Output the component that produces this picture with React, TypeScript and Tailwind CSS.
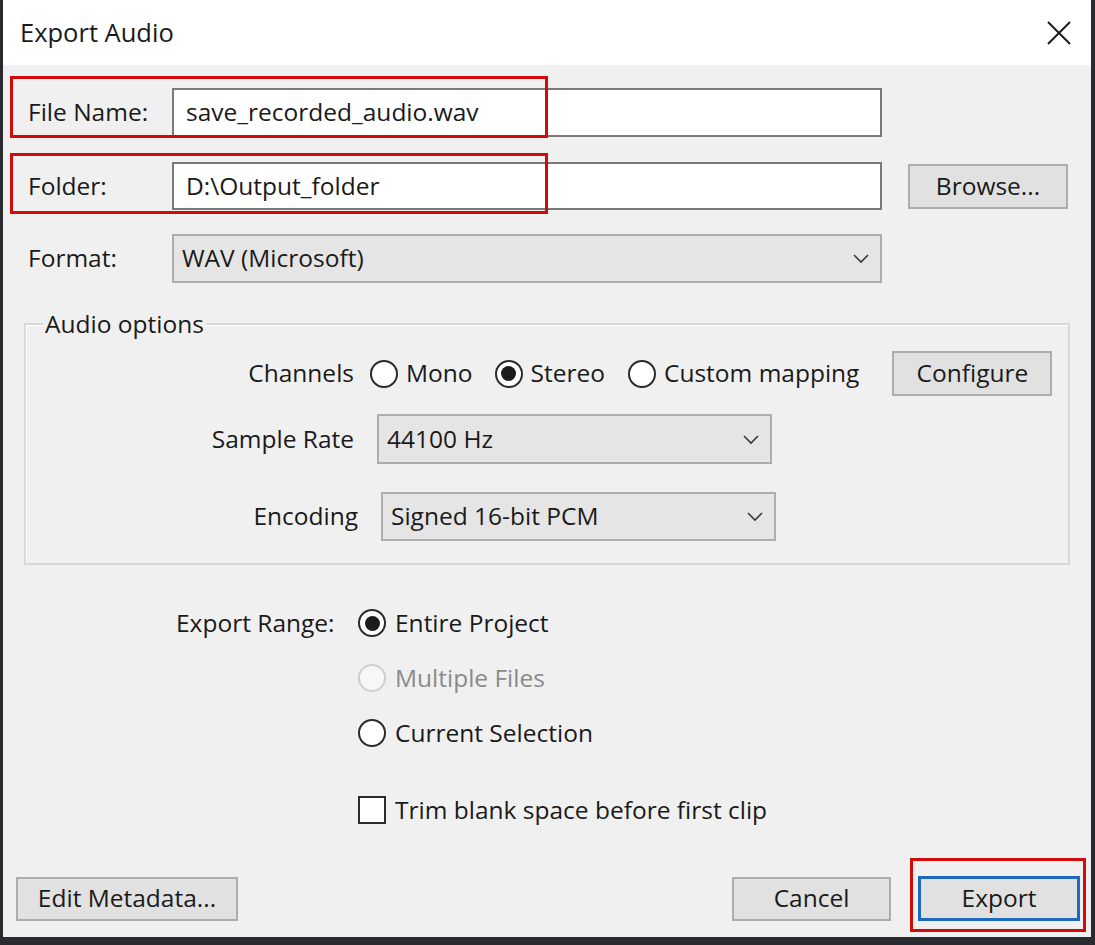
import React from "react";

function Radio({ checked, disabled }: { checked?: boolean; disabled?: boolean }) {
  return (
    <span
      className={`shrink-0 w-[28px] h-[28px] rounded-full border-2 flex items-center justify-center ${
        disabled ? "border-[#cfcfcf] bg-[#f7f7f7]" : "border-[#2b2b2b] bg-white"
      }`}
    >
      {checked && <span className="w-[15px] h-[15px] rounded-full bg-[#1c1c1c]" />}
    </span>
  );
}

function Chevron() {
  return (
    <svg width="18" height="11" viewBox="0 0 18 11" className="shrink-0">
      <polyline points="2,2 9,9 16,2" fill="none" stroke="#3a3a3a" strokeWidth="1.6" />
    </svg>
  );
}

function Select({ value, className }: { value: string; className: string }) {
  return (
    <div
      className={`flex items-center justify-between bg-[#e5e5e5] border-2 border-[#adadad] pl-[8px] pr-[10px] ${className}`}
    >
      <span>{value}</span>
      <Chevron />
    </div>
  );
}

function Button({ label, className }: { label: string; className: string }) {
  return (
    <div
      className={`flex items-center justify-center bg-[#e1e1e1] border-2 border-[#adadad] ${className}`}
    >
      {label}
    </div>
  );
}

export default function App() {
  return (
    <div className="w-[1095px] h-[945px] flex flex-col bg-[#f0f0f0] border-l-[3px] border-r-[4px] border-b-[8px] border-[#2a2b30] font-['Open_Sans',sans-serif] text-[24.5px] text-[#1a1a1a] leading-none overflow-hidden">
      {/* title bar */}
      <div className="h-[65px] shrink-0 bg-white flex items-center justify-between pl-[17px] pr-[19px]">
        <span className="text-[25.5px] text-[#1a1a1a]">Export Audio</span>
        <svg width="26" height="26" viewBox="0 0 26 26">
          <line x1="2" y1="2" x2="24" y2="24" stroke="#1a1a1a" strokeWidth="2" />
          <line x1="24" y1="2" x2="2" y2="24" stroke="#1a1a1a" strokeWidth="2" />
        </svg>
      </div>

      <div className="flex-1 flex flex-col">
        {/* File name */}
        <div className="relative flex items-center mt-[23px]">
          <span className="w-[169px] pl-[25px]">File Name:</span>
          <div className="w-[710px] h-[49px] bg-white border-2 border-[#7a7a7a] flex items-center pl-[12px]">
            save_recorded_audio.wav
          </div>
          <div className="absolute left-[7px] top-[-12px] w-[538px] h-[62px] border-[3px] border-[#d20a0a]" />
        </div>

        {/* Folder */}
        <div className="relative flex items-center mt-[25px]">
          <span className="w-[169px] pl-[25px]">Folder:</span>
          <div className="w-[710px] h-[48px] bg-white border-2 border-[#7a7a7a] flex items-center pl-[12px]">
            D:\Output_folder
          </div>
          <Button label="Browse..." className="ml-[26px] w-[160px] h-[45px]" />
          <div className="absolute left-[7px] top-[-9px] w-[538px] h-[61px] border-[3px] border-[#d20a0a]" />
        </div>

        {/* Format */}
        <div className="flex items-center mt-[24px]">
          <span className="w-[169px] pl-[25px]">Format:</span>
          <Select value="WAV (Microsoft)" className="w-[710px] h-[49px]" />
        </div>

        {/* Audio options */}
        <div className="relative ml-[21px] mt-[40px] w-[1046px] h-[242px] border-2 border-[#d8d8d8] shadow-[inset_1px_1px_0_#ffffff]">
          <span className="absolute left-[17px] top-[-13px] bg-[#f0f0f0] px-[2px]">Audio options</span>

          <div className="flex items-center mt-[26px]">
            <span className="w-[328px] text-right">Channels</span>
            <div className="flex items-center ml-[16px] gap-[8px]">
              <Radio />
              <span>Mono</span>
            </div>
            <div className="flex items-center ml-[22px] gap-[8px]">
              <Radio checked />
              <span>Stereo</span>
            </div>
            <div className="flex items-center ml-[23px] gap-[8px]">
              <Radio />
              <span>Custom mapping</span>
            </div>
            <Button label="Configure" className="ml-[33px] w-[160px] h-[45px]" />
          </div>

          <div className="flex items-center mt-[18px]">
            <span className="w-[328px] text-right">Sample Rate</span>
            <Select value="44100 Hz" className="ml-[23px] w-[395px] h-[50px]" />
          </div>

          <div className="flex items-center mt-[28px] ml-[4px]">
            <span className="w-[328px] text-right">Encoding</span>
            <Select value="Signed 16-bit PCM" className="ml-[23px] w-[395px] h-[49px]" />
          </div>
        </div>

        {/* Export range */}
        <div className="flex mt-[40px]">
          <span className="w-[355px] pl-[173px] h-[36px] flex items-center">Export Range:</span>
          <div className="flex flex-col">
            <div className="flex items-center h-[36px] gap-[9px]">
              <Radio checked />
              <span>Entire Project</span>
            </div>
            <div className="flex items-center h-[36px] gap-[9px] mt-[19px]">
              <Radio disabled />
              <span className="text-[#8a8a8a]">Multiple Files</span>
            </div>
            <div className="flex items-center h-[36px] gap-[9px] mt-[19px]">
              <Radio />
              <span>Current Selection</span>
            </div>
            <div className="flex items-center h-[36px] gap-[9px] mt-[41px]">
              <span className="w-[28px] h-[28px] border-2 border-[#2b2b2b] bg-white shrink-0" />
              <span>Trim blank space before first clip</span>
            </div>
          </div>
        </div>

        {/* buttons */}
        <div className="mt-auto flex items-center pl-[13px] pr-[11px] pb-[16px]">
          <Button label="Edit Metadata..." className="w-[222px] h-[44px]" />
          <div className="flex-1" />
          <Button label="Cancel" className="w-[159px] h-[44px]" />
          <div className="relative ml-[27px]">
            <div className="w-[162px] h-[45px] flex items-center justify-center bg-[#e1e1e1] border-[3px] border-[#1b6ac0]">
              Export
            </div>
            <div className="absolute left-[-8px] top-[-18px] w-[176px] h-[74px] border-[3px] border-[#d20a0a]" />
          </div>
        </div>
      </div>
    </div>
  );
}
